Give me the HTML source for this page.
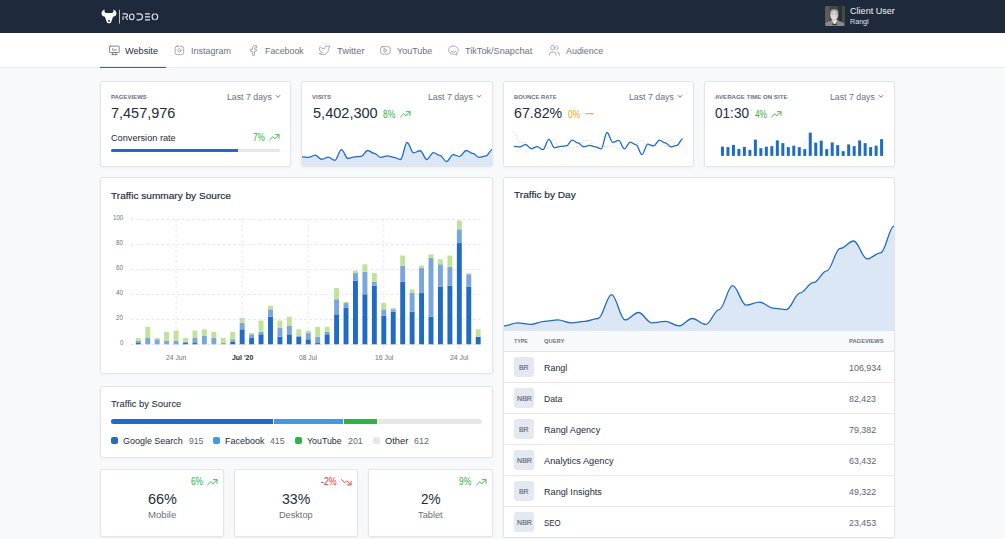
<!DOCTYPE html>
<html lang="en"><head><meta charset="utf-8"><title>Rodeo dashboard</title>
<style>
html,body{margin:0;padding:0}
body{width:1005px;height:539px;overflow:hidden;background:#f8f9fb;font-family:"Liberation Sans",sans-serif;position:relative}
.card{position:absolute;box-sizing:border-box;background:#fff;border:1px solid #e3e5e9;border-radius:2px;box-shadow:0 1px 2.5px rgba(35,46,60,.04)}
.t{position:absolute;white-space:nowrap;line-height:1;transform-origin:0 0}
</style></head><body>
<div style="position:absolute;left:0.00px;top:0.00px;width:1005.00px;height:33.00px;background:#1e293b"></div>
<svg style="position:absolute;left:100px;top:8px" width="62" height="18" viewBox="0 0 62 18">
<path d="M4.7 1.6 C2.2 2.4 1.1 4.6 1.7 6.6 C2.2 8.0 3.6 8.5 4.9 8.8 L6.7 13.7 C7.3 15.8 10.7 15.8 11.3 13.7 L13.1 8.8 C14.4 8.5 15.8 8.0 16.3 6.6 C16.9 4.6 15.8 2.4 13.3 1.6 C13.9 3.4 13.4 4.8 12.0 5.0 L6.0 5.0 C4.6 4.8 4.1 3.4 4.7 1.6 Z" fill="#fff"/>
<ellipse cx="9.0" cy="12.9" rx="1.1" ry="0.8" fill="#1e293b"/>
<rect x="19.0" y="1.8" width="0.9" height="13.8" fill="#cfd4dc"/>
<g fill="none" stroke="#e4e7ec" stroke-width="1.1">
<path d="M23.0 11.9V8.3 M22.5 5.85H26.0a1.55 1.55 0 0 1 0 3.1H24.6 M25.7 9.0L27.7 11.9"/>
<ellipse cx="31.75" cy="8.85" rx="2.3" ry="2.85"/>
<path d="M36.5 5.85H39.5a3.0 3.0 0 0 1 0 6.0H36.5"/>
<path d="M45.0 5.85H50.0 M45.0 8.85H50.0 M45.0 11.85H50.0"/>
<ellipse cx="54.9" cy="8.85" rx="2.8" ry="2.95"/>
</g><rect x="54.2" y="4.8" width="1.4" height="8.2" fill="#1e293b" opacity="0.55"/></svg>
<svg style="position:absolute;left:825px;top:6px" width="20" height="20" viewBox="0 0 20 20">
<defs><clipPath id="av"><rect width="20" height="20" rx="2"/></clipPath>
<radialGradient id="fc" cx="0.45" cy="0.5" r="0.6"><stop offset="0" stop-color="#e4e4e4"/><stop offset="0.7" stop-color="#c9c9c9"/><stop offset="1" stop-color="#9c9c9c"/></radialGradient></defs>
<g clip-path="url(#av)">
<rect width="20" height="20" fill="#454545"/>
<rect x="0" y="0" width="4.5" height="20" fill="#5c5c5c"/>
<rect x="13.5" y="0" width="3.5" height="20" fill="#2f2f2f"/>
<rect x="17" y="0" width="3" height="20" fill="#484848"/>
<path d="M0 20 L0 17.6 C1.8 15.8 4.6 15.2 6.6 14.2 L12.6 14.2 C14.6 15.2 17.4 15.8 19.4 17.6 L20 20 Z" fill="#8a8a8a"/>
<path d="M6.8 14.0 L9.6 18.6 L12.4 14.0 Z" fill="#ededed"/>
<path d="M7.6 17.4 L9.6 18.3 L11.6 17.4 L11.6 19.6 L9.6 18.8 L7.6 19.6 Z" fill="#262626"/>
<path d="M4.9 7.2 C4.7 1.8 13.7 1.6 13.6 7.2 C13.4 8 13 7 12.6 6 C11 4.6 7.4 4.6 5.8 6 C5.4 7 5.1 8 4.9 7.2 Z" fill="#9a9a9a"/>
<ellipse cx="9.2" cy="9.2" rx="4.1" ry="5.3" fill="url(#fc)"/>
<path d="M5.5 5.9 C6.5 3.2 11.9 3.2 12.9 5.9 C11.2 4.7 7.2 4.7 5.5 5.9 Z" fill="#a6a6a6"/>
<path d="M6.9 11.3 C7.9 13.3 10.7 13.3 11.7 11.3 C10.4 12.2 8.2 12.2 6.9 11.3Z" fill="#f6f6f6"/>
<rect x="6.6" y="7.7" width="1.9" height="0.7" fill="#8c8c8c"/><rect x="10.0" y="7.7" width="1.9" height="0.7" fill="#8c8c8c"/>
</g></svg>
<div style="position:absolute;left:0.00px;top:33.00px;width:1005.00px;height:34.00px;background:#fff;border-bottom:1px solid #eceef2"></div>
<div style="position:absolute;left:100.00px;top:67.00px;width:66.00px;height:1.00px;background:#206bc4"></div>
<div style="position:absolute;left:100.00px;top:66.00px;width:66.00px;height:1.00px;background:rgba(32,107,196,.12)"></div>
<svg style="position:absolute;left:107.60px;top:44.20px" width="12.8" height="12.8" viewBox="0 0 24 24" fill="none" stroke="#5d6776" stroke-width="1.45" stroke-linecap="round" stroke-linejoin="round"><rect x="3" y="4" width="18" height="12" rx="1"/><path d="M7 20h10M9 16v4M15 16v4M9 12v-4M12 12v-1M15 12v-2"/></svg>
<svg style="position:absolute;left:173.10px;top:44.20px" width="12.8" height="12.8" viewBox="0 0 24 24" fill="none" stroke="#8b929e" stroke-width="1.45" stroke-linecap="round" stroke-linejoin="round"><rect x="4" y="4" width="16" height="16" rx="4"/><circle cx="12" cy="12" r="3"/><path d="M16.5 7.5v.01"/></svg>
<svg style="position:absolute;left:246.70px;top:44.20px" width="12.8" height="12.8" viewBox="0 0 24 24" fill="none" stroke="#8b929e" stroke-width="1.45" stroke-linecap="round" stroke-linejoin="round"><path d="M7 10v4h3v7h4v-7h3l1 -4h-4v-2a1 1 0 0 1 1 -1h3v-4h-3a5 5 0 0 0 -5 5v2h-3"/></svg>
<svg style="position:absolute;left:318.40px;top:44.20px" width="12.8" height="12.8" viewBox="0 0 24 24" fill="none" stroke="#8b929e" stroke-width="1.45" stroke-linecap="round" stroke-linejoin="round"><path d="M22 4.01c-1 .49 -1.98 .689 -3 .99c-1.121 -1.265 -2.783 -1.335 -4.38 -.737s-2.643 2.06 -2.62 3.737v1c-3.245 .083 -6.135 -1.395 -8 -4c0 0 -4.182 7.433 4 11c-1.872 1.247 -3.739 2.088 -6 2c3.308 1.803 6.913 2.423 10.034 1.517c3.58 -1.04 6.522 -3.723 7.651 -7.742a13.84 13.84 0 0 0 .497 -3.753c-.002 -.249 1.51 -2.772 1.818 -4.013z"/></svg>
<svg style="position:absolute;left:378.90px;top:44.20px" width="12.8" height="12.8" viewBox="0 0 24 24" fill="none" stroke="#8b929e" stroke-width="1.45" stroke-linecap="round" stroke-linejoin="round"><rect x="3" y="5" width="18" height="14" rx="4"/><path d="M10 9l5 3l-5 3z"/></svg>
<svg style="position:absolute;left:447.20px;top:44.20px" width="12.8" height="12.8" viewBox="0 0 24 24" fill="none" stroke="#8b929e" stroke-width="1.45" stroke-linecap="round" stroke-linejoin="round"><path d="M17.802 17.292s.077 -.055 .2 -.149c1.843 -1.425 3 -3.49 3 -5.789c0 -4.286 -4.03 -7.764 -9 -7.764c-4.97 0 -9 3.478 -9 7.764c0 4.288 4.03 7.646 9 7.646c.424 0 1.12 -.028 2.088 -.084c1.262 .82 3.104 1.493 4.716 1.493c.499 0 .734 -.41 .414 -.828c-.486 -.596 -1.156 -1.551 -1.416 -2.29z"/><path d="M7.5 13.5c2.5 2.5 6.5 2.5 9 0"/></svg>
<svg style="position:absolute;left:547.80px;top:44.20px" width="12.8" height="12.8" viewBox="0 0 24 24" fill="none" stroke="#8b929e" stroke-width="1.45" stroke-linecap="round" stroke-linejoin="round"><circle cx="9" cy="7" r="4"/><path d="M3 21v-2a4 4 0 0 1 4 -4h4a4 4 0 0 1 4 4v2"/><path d="M16 3.13a4 4 0 0 1 0 7.75"/><path d="M21 21v-2a4 4 0 0 0 -3 -3.85"/></svg>
<div class="card" style="left:100px;top:81px;width:191px;height:86px"></div>
<div class="card" style="left:301px;top:81px;width:192px;height:86px"></div>
<div class="card" style="left:503px;top:81px;width:191px;height:86px"></div>
<div class="card" style="left:704px;top:81px;width:191px;height:86px"></div>
<svg style="position:absolute;left:274.55px;top:93.2px" width="6" height="6" viewBox="0 0 6 6" fill="none" stroke="#626a78" stroke-width="0.95"><path d="M0.9 2.2L3 4.3L5.1 2.2"/></svg>
<svg style="position:absolute;left:475.60px;top:93.2px" width="6" height="6" viewBox="0 0 6 6" fill="none" stroke="#626a78" stroke-width="0.95"><path d="M0.9 2.2L3 4.3L5.1 2.2"/></svg>
<svg style="position:absolute;left:676.65px;top:93.2px" width="6" height="6" viewBox="0 0 6 6" fill="none" stroke="#626a78" stroke-width="0.95"><path d="M0.9 2.2L3 4.3L5.1 2.2"/></svg>
<svg style="position:absolute;left:877.70px;top:93.2px" width="6" height="6" viewBox="0 0 6 6" fill="none" stroke="#626a78" stroke-width="0.95"><path d="M0.9 2.2L3 4.3L5.1 2.2"/></svg>
<svg style="position:absolute;left:268.05px;top:131.45px" width="12.6" height="12.6" viewBox="0 0 24 24" fill="none" stroke="#2fb344" stroke-width="1.7" stroke-linecap="round" stroke-linejoin="round"><polyline points="3 17 9 11 13 15 21 7"/><polyline points="14 7 21 7 21 14"/></svg>
<div style="position:absolute;left:110.90px;top:149.00px;width:169.00px;height:2.90px;background:#e6e8eb;border-radius:1.5px"></div>
<div style="position:absolute;left:110.90px;top:149.00px;width:126.80px;height:2.90px;background:#206bc4;border-radius:1.5px 0 0 1.5px"></div>
<svg style="position:absolute;left:398.60px;top:108.00px" width="12.6" height="12.6" viewBox="0 0 24 24" fill="none" stroke="#2fb344" stroke-width="1.7" stroke-linecap="round" stroke-linejoin="round"><polyline points="3 17 9 11 13 15 21 7"/><polyline points="14 7 21 7 21 14"/></svg>
<svg style="position:absolute;left:582.95px;top:107.30px" width="13.2" height="13.2" viewBox="0 0 24 24" fill="none" stroke="#f7b540" stroke-width="2.3" stroke-linecap="round" stroke-linejoin="round"><line x1="5" y1="12" x2="19" y2="12"/></svg>
<svg style="position:absolute;left:769.90px;top:108.00px" width="12.6" height="12.6" viewBox="0 0 24 24" fill="none" stroke="#2fb344" stroke-width="1.7" stroke-linecap="round" stroke-linejoin="round"><polyline points="3 17 9 11 13 15 21 7"/><polyline points="14 7 21 7 21 14"/></svg>
<svg style="position:absolute;left:301.60px;top:81.5px;border-radius:0 0 2px 2px" width="190.5" height="84.70" viewBox="0 0 190.5 84.70"><path d="M0.00 74.95C2.43 74.95 4.14 75.47 6.57 75.47C9.00 75.47 10.70 73.15 13.14 73.15C15.57 73.15 17.27 77.28 19.71 77.28C22.14 77.28 23.84 75.21 26.28 75.21C28.71 75.21 30.41 78.31 32.84 78.31C35.28 78.31 36.98 67.73 39.41 67.73C41.85 67.73 43.55 76.50 45.98 76.50C48.42 76.50 50.12 74.95 52.55 74.95C54.98 74.95 56.69 74.44 59.12 74.44C61.55 74.44 63.26 68.50 65.69 68.50C68.12 68.50 69.83 71.34 72.26 71.34C74.69 71.34 76.39 75.47 78.83 75.47C81.26 75.47 82.96 73.92 85.40 73.92C87.83 73.92 89.53 75.47 91.97 75.47C94.40 75.47 96.10 77.53 98.53 77.53C100.97 77.53 102.67 60.51 105.10 60.51C107.54 60.51 109.24 70.83 111.67 70.83C114.11 70.83 115.81 68.76 118.24 68.76C120.67 68.76 122.38 77.53 124.81 77.53C127.24 77.53 128.95 70.57 131.38 70.57C133.81 70.57 135.52 73.41 137.95 73.41C140.38 73.41 142.08 79.60 144.52 79.60C146.95 79.60 148.65 72.63 151.09 72.63C153.52 72.63 155.22 74.44 157.66 74.44C160.09 74.44 161.79 68.50 164.22 68.50C166.66 68.50 168.36 71.34 170.79 71.34C173.23 71.34 174.93 75.47 177.36 75.47C179.80 75.47 181.50 73.92 183.93 73.92C186.36 73.92 188.07 67.21 190.50 67.21L190.5 84.70L0 84.70Z" fill="#dce7f6"/><path d="M0.00 74.95C2.43 74.95 4.14 75.47 6.57 75.47C9.00 75.47 10.70 73.15 13.14 73.15C15.57 73.15 17.27 77.28 19.71 77.28C22.14 77.28 23.84 75.21 26.28 75.21C28.71 75.21 30.41 78.31 32.84 78.31C35.28 78.31 36.98 67.73 39.41 67.73C41.85 67.73 43.55 76.50 45.98 76.50C48.42 76.50 50.12 74.95 52.55 74.95C54.98 74.95 56.69 74.44 59.12 74.44C61.55 74.44 63.26 68.50 65.69 68.50C68.12 68.50 69.83 71.34 72.26 71.34C74.69 71.34 76.39 75.47 78.83 75.47C81.26 75.47 82.96 73.92 85.40 73.92C87.83 73.92 89.53 75.47 91.97 75.47C94.40 75.47 96.10 77.53 98.53 77.53C100.97 77.53 102.67 60.51 105.10 60.51C107.54 60.51 109.24 70.83 111.67 70.83C114.11 70.83 115.81 68.76 118.24 68.76C120.67 68.76 122.38 77.53 124.81 77.53C127.24 77.53 128.95 70.57 131.38 70.57C133.81 70.57 135.52 73.41 137.95 73.41C140.38 73.41 142.08 79.60 144.52 79.60C146.95 79.60 148.65 72.63 151.09 72.63C153.52 72.63 155.22 74.44 157.66 74.44C160.09 74.44 161.79 68.50 164.22 68.50C166.66 68.50 168.36 71.34 170.79 71.34C173.23 71.34 174.93 75.47 177.36 75.47C179.80 75.47 181.50 73.92 183.93 73.92C186.36 73.92 188.07 67.21 190.50 67.21" fill="none" stroke="#206bc4" stroke-width="1.3" stroke-linejoin="round"/></svg>
<svg style="position:absolute;left:0;top:0" width="1005" height="539" viewBox="0 0 1005 539" fill="none"><path d="M513.90 132.50C516.06 132.50 517.56 142.19 519.72 142.19C521.88 142.19 523.39 142.94 525.54 142.94C527.70 142.94 529.21 149.65 531.36 149.65C533.52 149.65 535.03 146.91 537.18 146.91C539.34 146.91 540.85 146.91 543.00 146.91C545.16 146.91 546.67 147.91 548.82 147.91C550.98 147.91 552.49 138.96 554.64 138.96C556.80 138.96 558.31 150.89 560.47 150.89C562.62 150.89 564.13 144.93 566.29 144.93C568.44 144.93 569.95 148.65 572.11 148.65C574.26 148.65 575.77 146.66 577.93 146.66C580.08 146.66 581.59 140.20 583.75 140.20C585.90 140.20 587.41 140.45 589.57 140.45C591.72 140.45 593.23 148.90 595.39 148.90C597.55 148.90 599.05 145.92 601.21 145.92C603.37 145.92 604.88 146.91 607.03 146.91C609.19 146.91 610.70 145.42 612.85 145.42C615.01 145.42 616.52 148.90 618.67 148.90C620.83 148.90 622.34 146.91 624.49 146.91C626.65 146.91 628.16 142.94 630.31 142.94C632.47 142.94 633.98 144.18 636.13 144.18C638.29 144.18 639.80 140.20 641.96 140.20C644.11 140.20 645.62 146.42 647.78 146.42C649.93 146.42 651.44 144.68 653.60 144.68C655.75 144.68 657.26 142.44 659.42 142.44C661.57 142.44 663.08 145.42 665.24 145.42C667.39 145.42 668.90 139.46 671.06 139.46C673.21 139.46 674.72 145.92 676.88 145.92C679.04 145.92 680.54 146.42 682.70 146.42" stroke="#c9ccd2" stroke-width="1" stroke-dasharray="1.3 2.0"/><path d="M513.90 146.42C516.06 146.42 517.56 146.91 519.72 146.91C521.88 146.91 523.39 144.68 525.54 144.68C527.70 144.68 529.21 148.65 531.36 148.65C533.52 148.65 535.03 146.66 537.18 146.66C539.34 146.66 540.85 149.65 543.00 149.65C545.16 149.65 546.67 139.46 548.82 139.46C550.98 139.46 552.49 147.91 554.64 147.91C556.80 147.91 558.31 146.42 560.47 146.42C562.62 146.42 564.13 145.92 566.29 145.92C568.44 145.92 569.95 140.20 572.11 140.20C574.26 140.20 575.77 142.94 577.93 142.94C580.08 142.94 581.59 146.91 583.75 146.91C585.90 146.91 587.41 145.42 589.57 145.42C591.72 145.42 593.23 146.91 595.39 146.91C597.55 146.91 599.05 148.90 601.21 148.90C603.37 148.90 604.88 132.50 607.03 132.50C609.19 132.50 610.70 142.44 612.85 142.44C615.01 142.44 616.52 140.45 618.67 140.45C620.83 140.45 622.34 148.90 624.49 148.90C626.65 148.90 628.16 142.19 630.31 142.19C632.47 142.19 633.98 144.93 636.13 144.93C638.29 144.93 639.80 154.62 641.96 154.62C644.11 154.62 645.62 144.18 647.78 144.18C649.93 144.18 651.44 145.92 653.60 145.92C655.75 145.92 657.26 140.20 659.42 140.20C661.57 140.20 663.08 142.94 665.24 142.94C667.39 142.94 668.90 146.91 671.06 146.91C673.21 146.91 674.72 145.42 676.88 145.42C679.04 145.42 680.54 138.96 682.70 138.96" stroke="#206bc4" stroke-width="1.3" stroke-linejoin="round"/></svg>
<svg style="position:absolute;left:0;top:0" width="1005" height="539" viewBox="0 0 1005 539" fill="#206bc4"><rect x="720.95" y="146.65" width="3.0" height="9.25"/><rect x="726.44" y="147.15" width="3.0" height="8.75"/><rect x="731.93" y="144.90" width="3.0" height="11.00"/><rect x="737.41" y="148.90" width="3.0" height="7.00"/><rect x="742.90" y="146.90" width="3.0" height="9.00"/><rect x="748.39" y="149.90" width="3.0" height="6.00"/><rect x="753.88" y="139.65" width="3.0" height="16.25"/><rect x="759.37" y="148.15" width="3.0" height="7.75"/><rect x="764.85" y="146.65" width="3.0" height="9.25"/><rect x="770.34" y="146.15" width="3.0" height="9.75"/><rect x="775.83" y="140.40" width="3.0" height="15.50"/><rect x="781.32" y="143.15" width="3.0" height="12.75"/><rect x="786.81" y="147.15" width="3.0" height="8.75"/><rect x="792.29" y="145.65" width="3.0" height="10.25"/><rect x="797.78" y="147.15" width="3.0" height="8.75"/><rect x="803.27" y="149.15" width="3.0" height="6.75"/><rect x="808.76" y="132.65" width="3.0" height="23.25"/><rect x="814.25" y="142.65" width="3.0" height="13.25"/><rect x="819.73" y="140.65" width="3.0" height="15.25"/><rect x="825.22" y="149.15" width="3.0" height="6.75"/><rect x="830.71" y="142.40" width="3.0" height="13.50"/><rect x="836.20" y="145.15" width="3.0" height="10.75"/><rect x="841.69" y="151.15" width="3.0" height="4.75"/><rect x="847.17" y="144.40" width="3.0" height="11.50"/><rect x="852.66" y="146.15" width="3.0" height="9.75"/><rect x="858.15" y="140.40" width="3.0" height="15.50"/><rect x="863.64" y="143.15" width="3.0" height="12.75"/><rect x="869.13" y="147.15" width="3.0" height="8.75"/><rect x="874.61" y="145.65" width="3.0" height="10.25"/><rect x="880.10" y="139.15" width="3.0" height="16.75"/></svg>
<div class="card" style="left:100px;top:177px;width:393px;height:197px"></div>
<svg style="position:absolute;left:0;top:0" width="1005" height="539" viewBox="0 0 1005 539"><g stroke="#e5e7eb" stroke-width="1" stroke-dasharray="2.6 2.5"><line x1="131" y1="344.50" x2="481" y2="344.50"/><line x1="131" y1="319.50" x2="481" y2="319.50"/><line x1="131" y1="294.50" x2="481" y2="294.50"/><line x1="131" y1="269.50" x2="481" y2="269.50"/><line x1="131" y1="244.50" x2="481" y2="244.50"/><line x1="131" y1="219.50" x2="481" y2="219.50"/><line x1="176.07" y1="219.5" x2="176.07" y2="344.5"/><line x1="176.07" y1="345.0" x2="176.07" y2="348.5" stroke-dasharray="none"/><line x1="242.16" y1="219.5" x2="242.16" y2="344.5"/><line x1="242.16" y1="345.0" x2="242.16" y2="348.5" stroke-dasharray="none"/><line x1="308.26" y1="219.5" x2="308.26" y2="344.5"/><line x1="308.26" y1="345.0" x2="308.26" y2="348.5" stroke-dasharray="none"/><line x1="383.79" y1="219.5" x2="383.79" y2="344.5"/><line x1="383.79" y1="345.0" x2="383.79" y2="348.5" stroke-dasharray="none"/><line x1="459.33" y1="219.5" x2="459.33" y2="344.5"/><line x1="459.33" y1="345.0" x2="459.33" y2="348.5" stroke-dasharray="none"/></g><rect x="135.85" y="343.05" width="4.9" height="1.25" fill="#206bc4"/><rect x="135.85" y="340.55" width="4.9" height="2.50" fill="#79a6dc"/><rect x="135.85" y="338.05" width="4.9" height="2.50" fill="#bfe399"/><rect x="145.29" y="338.05" width="4.9" height="6.25" fill="#79a6dc"/><rect x="145.29" y="326.80" width="4.9" height="11.25" fill="#bfe399"/><rect x="154.73" y="339.30" width="4.9" height="5.00" fill="#79a6dc"/><rect x="154.73" y="338.05" width="4.9" height="1.25" fill="#bfe399"/><rect x="164.18" y="340.55" width="4.9" height="3.75" fill="#79a6dc"/><rect x="164.18" y="331.80" width="4.9" height="8.75" fill="#bfe399"/><rect x="173.62" y="340.55" width="4.9" height="3.75" fill="#79a6dc"/><rect x="173.62" y="330.55" width="4.9" height="10.00" fill="#bfe399"/><rect x="183.06" y="343.05" width="4.9" height="1.25" fill="#206bc4"/><rect x="183.06" y="341.80" width="4.9" height="1.25" fill="#79a6dc"/><rect x="183.06" y="338.05" width="4.9" height="3.75" fill="#bfe399"/><rect x="192.50" y="343.05" width="4.9" height="1.25" fill="#206bc4"/><rect x="192.50" y="338.05" width="4.9" height="5.00" fill="#79a6dc"/><rect x="192.50" y="330.55" width="4.9" height="7.50" fill="#bfe399"/><rect x="201.94" y="335.55" width="4.9" height="8.75" fill="#79a6dc"/><rect x="201.94" y="329.30" width="4.9" height="6.25" fill="#bfe399"/><rect x="211.39" y="338.05" width="4.9" height="6.25" fill="#79a6dc"/><rect x="211.39" y="331.80" width="4.9" height="6.25" fill="#bfe399"/><rect x="220.83" y="343.05" width="4.9" height="1.25" fill="#79a6dc"/><rect x="220.83" y="338.05" width="4.9" height="5.00" fill="#bfe399"/><rect x="230.27" y="341.80" width="4.9" height="2.50" fill="#206bc4"/><rect x="230.27" y="339.30" width="4.9" height="2.50" fill="#79a6dc"/><rect x="230.27" y="331.80" width="4.9" height="7.50" fill="#bfe399"/><rect x="239.71" y="329.30" width="4.9" height="15.00" fill="#206bc4"/><rect x="239.71" y="323.05" width="4.9" height="6.25" fill="#79a6dc"/><rect x="239.71" y="318.05" width="4.9" height="5.00" fill="#bfe399"/><rect x="249.15" y="338.05" width="4.9" height="6.25" fill="#206bc4"/><rect x="249.15" y="334.30" width="4.9" height="3.75" fill="#79a6dc"/><rect x="249.15" y="333.05" width="4.9" height="1.25" fill="#bfe399"/><rect x="258.60" y="334.30" width="4.9" height="10.00" fill="#206bc4"/><rect x="258.60" y="331.80" width="4.9" height="2.50" fill="#79a6dc"/><rect x="258.60" y="320.55" width="4.9" height="11.25" fill="#bfe399"/><rect x="268.04" y="316.80" width="4.9" height="27.50" fill="#206bc4"/><rect x="268.04" y="309.30" width="4.9" height="7.50" fill="#79a6dc"/><rect x="268.04" y="305.55" width="4.9" height="3.75" fill="#bfe399"/><rect x="277.48" y="336.80" width="4.9" height="7.50" fill="#206bc4"/><rect x="277.48" y="328.05" width="4.9" height="8.75" fill="#79a6dc"/><rect x="277.48" y="320.55" width="4.9" height="7.50" fill="#bfe399"/><rect x="286.92" y="334.30" width="4.9" height="10.00" fill="#206bc4"/><rect x="286.92" y="325.55" width="4.9" height="8.75" fill="#79a6dc"/><rect x="286.92" y="316.80" width="4.9" height="8.75" fill="#bfe399"/><rect x="296.36" y="336.80" width="4.9" height="7.50" fill="#206bc4"/><rect x="296.36" y="335.55" width="4.9" height="1.25" fill="#79a6dc"/><rect x="296.36" y="329.30" width="4.9" height="6.25" fill="#bfe399"/><rect x="305.81" y="339.30" width="4.9" height="5.00" fill="#206bc4"/><rect x="305.81" y="333.05" width="4.9" height="6.25" fill="#79a6dc"/><rect x="305.81" y="330.55" width="4.9" height="2.50" fill="#bfe399"/><rect x="315.25" y="343.05" width="4.9" height="1.25" fill="#206bc4"/><rect x="315.25" y="336.80" width="4.9" height="6.25" fill="#79a6dc"/><rect x="315.25" y="326.80" width="4.9" height="10.00" fill="#bfe399"/><rect x="324.69" y="334.30" width="4.9" height="10.00" fill="#206bc4"/><rect x="324.69" y="331.80" width="4.9" height="2.50" fill="#79a6dc"/><rect x="324.69" y="326.80" width="4.9" height="5.00" fill="#bfe399"/><rect x="334.13" y="314.30" width="4.9" height="30.00" fill="#206bc4"/><rect x="334.13" y="299.30" width="4.9" height="15.00" fill="#79a6dc"/><rect x="334.13" y="288.05" width="4.9" height="11.25" fill="#bfe399"/><rect x="343.57" y="308.05" width="4.9" height="36.25" fill="#206bc4"/><rect x="343.57" y="303.05" width="4.9" height="5.00" fill="#79a6dc"/><rect x="343.57" y="301.80" width="4.9" height="1.25" fill="#bfe399"/><rect x="353.02" y="280.55" width="4.9" height="63.75" fill="#206bc4"/><rect x="353.02" y="273.05" width="4.9" height="7.50" fill="#79a6dc"/><rect x="353.02" y="270.55" width="4.9" height="2.50" fill="#bfe399"/><rect x="362.46" y="294.30" width="4.9" height="50.00" fill="#206bc4"/><rect x="362.46" y="271.80" width="4.9" height="22.50" fill="#79a6dc"/><rect x="362.46" y="264.30" width="4.9" height="7.50" fill="#bfe399"/><rect x="371.90" y="285.55" width="4.9" height="58.75" fill="#206bc4"/><rect x="371.90" y="281.80" width="4.9" height="3.75" fill="#79a6dc"/><rect x="371.90" y="273.05" width="4.9" height="8.75" fill="#bfe399"/><rect x="381.34" y="315.55" width="4.9" height="28.75" fill="#206bc4"/><rect x="381.34" y="309.30" width="4.9" height="6.25" fill="#79a6dc"/><rect x="381.34" y="303.05" width="4.9" height="6.25" fill="#bfe399"/><rect x="390.78" y="311.80" width="4.9" height="32.50" fill="#206bc4"/><rect x="390.78" y="309.30" width="4.9" height="2.50" fill="#79a6dc"/><rect x="390.78" y="308.05" width="4.9" height="1.25" fill="#bfe399"/><rect x="400.23" y="281.80" width="4.9" height="62.50" fill="#206bc4"/><rect x="400.23" y="265.55" width="4.9" height="16.25" fill="#79a6dc"/><rect x="400.23" y="255.55" width="4.9" height="10.00" fill="#bfe399"/><rect x="409.67" y="311.80" width="4.9" height="32.50" fill="#206bc4"/><rect x="409.67" y="293.05" width="4.9" height="18.75" fill="#79a6dc"/><rect x="409.67" y="289.30" width="4.9" height="3.75" fill="#bfe399"/><rect x="419.11" y="293.05" width="4.9" height="51.25" fill="#206bc4"/><rect x="419.11" y="268.05" width="4.9" height="25.00" fill="#79a6dc"/><rect x="419.11" y="265.55" width="4.9" height="2.50" fill="#bfe399"/><rect x="428.55" y="316.80" width="4.9" height="27.50" fill="#206bc4"/><rect x="428.55" y="258.05" width="4.9" height="58.75" fill="#79a6dc"/><rect x="428.55" y="254.30" width="4.9" height="3.75" fill="#bfe399"/><rect x="437.99" y="286.80" width="4.9" height="57.50" fill="#206bc4"/><rect x="437.99" y="264.30" width="4.9" height="22.50" fill="#79a6dc"/><rect x="437.99" y="259.30" width="4.9" height="5.00" fill="#bfe399"/><rect x="447.44" y="285.55" width="4.9" height="58.75" fill="#206bc4"/><rect x="447.44" y="266.80" width="4.9" height="18.75" fill="#79a6dc"/><rect x="447.44" y="255.55" width="4.9" height="11.25" fill="#bfe399"/><rect x="456.88" y="243.05" width="4.9" height="101.25" fill="#206bc4"/><rect x="456.88" y="229.30" width="4.9" height="13.75" fill="#79a6dc"/><rect x="456.88" y="220.55" width="4.9" height="8.75" fill="#bfe399"/><rect x="466.32" y="286.80" width="4.9" height="57.50" fill="#206bc4"/><rect x="466.32" y="274.30" width="4.9" height="12.50" fill="#79a6dc"/><rect x="466.32" y="273.05" width="4.9" height="1.25" fill="#bfe399"/><rect x="475.76" y="336.80" width="4.9" height="7.50" fill="#206bc4"/><rect x="475.76" y="329.30" width="4.9" height="7.50" fill="#bfe399"/></svg>
<div class="card" style="left:100px;top:386px;width:393px;height:72px"></div>
<div style="position:absolute;left:111.4px;top:419.2px;width:370.9px;height:4.6px;border-radius:2.3px;overflow:hidden;background:#e6e7e9">
<div style="position:absolute;left:0;top:0;height:100%;width:161.3px;background:#206bc4"></div>
<div style="position:absolute;left:161.3px;top:0;height:100%;width:1.3px;background:#fff"></div>
<div style="position:absolute;left:162.6px;top:0;height:100%;width:68.6px;background:#4299e1"></div>
<div style="position:absolute;left:231.2px;top:0;height:100%;width:1.3px;background:#fff"></div>
<div style="position:absolute;left:232.5px;top:0;height:100%;width:33.1px;background:#2fb344"></div>
<div style="position:absolute;left:265.6px;top:0;height:100%;width:1.3px;background:#fff"></div>
</div>
<div style="position:absolute;left:110.90px;top:437.20px;width:6.90px;height:6.90px;background:#206bc4;border-radius:2px"></div>
<div style="position:absolute;left:213.00px;top:437.20px;width:6.90px;height:6.90px;background:#4299e1;border-radius:2px"></div>
<div style="position:absolute;left:295.00px;top:437.20px;width:6.90px;height:6.90px;background:#2fb344;border-radius:2px"></div>
<div style="position:absolute;left:373.10px;top:437.20px;width:6.90px;height:6.90px;background:#e6e7e9;border-radius:2px"></div>
<div class="card" style="left:100px;top:469px;width:124px;height:68px"></div>
<div class="card" style="left:234px;top:469px;width:124px;height:68px"></div>
<div class="card" style="left:368px;top:469px;width:125px;height:68px"></div>
<svg style="position:absolute;left:205.70px;top:475.60px" width="12.6" height="12.6" viewBox="0 0 24 24" fill="none" stroke="#2fb344" stroke-width="1.7" stroke-linecap="round" stroke-linejoin="round"><polyline points="3 17 9 11 13 15 21 7"/><polyline points="14 7 21 7 21 14"/></svg>
<svg style="position:absolute;left:340.15px;top:475.60px" width="12.6" height="12.6" viewBox="0 0 24 24" fill="none" stroke="#d63939" stroke-width="1.7" stroke-linecap="round" stroke-linejoin="round"><polyline points="3 7 9 13 13 9 21 17"/><polyline points="21 10 21 17 14 17"/></svg>
<svg style="position:absolute;left:474.90px;top:475.60px" width="12.6" height="12.6" viewBox="0 0 24 24" fill="none" stroke="#2fb344" stroke-width="1.7" stroke-linecap="round" stroke-linejoin="round"><polyline points="3 17 9 11 13 15 21 7"/><polyline points="14 7 21 7 21 14"/></svg>
<div class="card" style="left:503px;top:177px;width:392px;height:361px"></div>
<svg style="position:absolute;left:0;top:0" width="1005" height="539" viewBox="0 0 1005 539"><path d="M504.00 325.93C508.98 325.93 512.47 322.95 517.45 322.95C522.43 322.95 525.92 324.44 530.90 324.44C535.88 324.44 539.36 321.46 544.34 321.46C549.33 321.46 552.81 319.97 557.79 319.97C562.77 319.97 566.26 322.95 571.24 322.95C576.22 322.95 579.71 321.46 584.69 321.46C589.67 321.46 593.16 318.48 598.14 318.48C603.12 318.48 606.61 294.64 611.59 294.64C616.57 294.64 620.05 319.97 625.03 319.97C630.02 319.97 633.50 312.52 638.48 312.52C643.46 312.52 646.95 322.95 651.93 322.95C656.91 322.95 660.40 321.46 665.38 321.46C670.36 321.46 673.85 325.93 678.83 325.93C683.81 325.93 687.30 318.48 692.28 318.48C697.26 318.48 700.74 324.44 705.72 324.44C710.70 324.44 714.19 309.54 719.17 309.54C724.15 309.54 727.64 285.70 732.62 285.70C737.60 285.70 741.09 305.07 746.07 305.07C751.05 305.07 754.54 302.09 759.52 302.09C764.50 302.09 767.98 308.05 772.97 308.05C777.95 308.05 781.43 309.54 786.41 309.54C791.39 309.54 794.88 293.15 799.86 293.15C804.84 293.15 808.33 282.72 813.31 282.72C818.29 282.72 821.78 270.80 826.76 270.80C831.74 270.80 835.23 248.45 840.21 248.45C845.19 248.45 848.67 241.00 853.66 241.00C858.64 241.00 862.12 258.88 867.10 258.88C872.08 258.88 875.57 252.92 880.55 252.92C885.53 252.92 889.02 226.10 894.00 226.10L894 331L504 331Z" fill="#dce7f6"/><path d="M504.00 325.93C508.98 325.93 512.47 322.95 517.45 322.95C522.43 322.95 525.92 324.44 530.90 324.44C535.88 324.44 539.36 321.46 544.34 321.46C549.33 321.46 552.81 319.97 557.79 319.97C562.77 319.97 566.26 322.95 571.24 322.95C576.22 322.95 579.71 321.46 584.69 321.46C589.67 321.46 593.16 318.48 598.14 318.48C603.12 318.48 606.61 294.64 611.59 294.64C616.57 294.64 620.05 319.97 625.03 319.97C630.02 319.97 633.50 312.52 638.48 312.52C643.46 312.52 646.95 322.95 651.93 322.95C656.91 322.95 660.40 321.46 665.38 321.46C670.36 321.46 673.85 325.93 678.83 325.93C683.81 325.93 687.30 318.48 692.28 318.48C697.26 318.48 700.74 324.44 705.72 324.44C710.70 324.44 714.19 309.54 719.17 309.54C724.15 309.54 727.64 285.70 732.62 285.70C737.60 285.70 741.09 305.07 746.07 305.07C751.05 305.07 754.54 302.09 759.52 302.09C764.50 302.09 767.98 308.05 772.97 308.05C777.95 308.05 781.43 309.54 786.41 309.54C791.39 309.54 794.88 293.15 799.86 293.15C804.84 293.15 808.33 282.72 813.31 282.72C818.29 282.72 821.78 270.80 826.76 270.80C831.74 270.80 835.23 248.45 840.21 248.45C845.19 248.45 848.67 241.00 853.66 241.00C858.64 241.00 862.12 258.88 867.10 258.88C872.08 258.88 875.57 252.92 880.55 252.92C885.53 252.92 889.02 226.10 894.00 226.10" fill="none" stroke="#206bc4" stroke-width="1.3" stroke-linejoin="round"/></svg>
<div style="position:absolute;left:504.00px;top:331.00px;width:390.00px;height:20.00px;background:#f8f9fb"></div>
<div style="position:absolute;left:504.00px;top:351.00px;width:390.00px;height:1.00px;background:#e4e6ea"></div>
<div style="position:absolute;left:514.00px;top:357.00px;width:20.00px;height:20.00px;background:#e4e8f1;border-radius:2.4px"></div>
<div style="position:absolute;left:504.00px;top:382.00px;width:390.00px;height:1.00px;background:#e6e8ec"></div>
<div style="position:absolute;left:514.00px;top:388.00px;width:20.00px;height:20.00px;background:#e4e8f1;border-radius:2.4px"></div>
<div style="position:absolute;left:504.00px;top:413.00px;width:390.00px;height:1.00px;background:#e6e8ec"></div>
<div style="position:absolute;left:514.00px;top:419.00px;width:20.00px;height:20.00px;background:#e4e8f1;border-radius:2.4px"></div>
<div style="position:absolute;left:504.00px;top:444.00px;width:390.00px;height:1.00px;background:#e6e8ec"></div>
<div style="position:absolute;left:514.00px;top:450.00px;width:20.00px;height:20.00px;background:#e4e8f1;border-radius:2.4px"></div>
<div style="position:absolute;left:504.00px;top:475.00px;width:390.00px;height:1.00px;background:#e6e8ec"></div>
<div style="position:absolute;left:514.00px;top:481.00px;width:20.00px;height:20.00px;background:#e4e8f1;border-radius:2.4px"></div>
<div style="position:absolute;left:504.00px;top:506.00px;width:390.00px;height:1.00px;background:#e6e8ec"></div>
<div style="position:absolute;left:514.00px;top:512.00px;width:20.00px;height:20.00px;background:#e4e8f1;border-radius:2.4px"></div>
<span class="t" id="t0" style="left:850.30px;top:6.000px;font-size:9.6px;color:#f1f3f6;transform:scaleX(0.9462)">Client User</span>
<span class="t" id="t1" style="left:850.30px;top:18.000px;font-size:7.5px;color:#e1e4e9;transform:scaleX(0.9536)">Rangl</span>
<span class="t" id="t2" style="left:125.00px;top:46.000px;font-size:9.6px;color:#232e3c;transform:scaleX(0.9570)">Website</span>
<span class="t" id="t3" style="left:191.20px;top:46.000px;font-size:9.6px;color:#6a727f;transform:scaleX(0.9374)">Instagram</span>
<span class="t" id="t4" style="left:264.80px;top:46.000px;font-size:9.6px;color:#6a727f;transform:scaleX(0.9184)">Facebook</span>
<span class="t" id="t5" style="left:336.50px;top:46.000px;font-size:9.6px;color:#6a727f;transform:scaleX(0.9729)">Twitter</span>
<span class="t" id="t6" style="left:397.00px;top:46.000px;font-size:9.6px;color:#6a727f;transform:scaleX(0.9363)">YouTube</span>
<span class="t" id="t7" style="left:465.30px;top:46.000px;font-size:9.6px;color:#6a727f;transform:scaleX(0.9521)">TikTok/Snapchat</span>
<span class="t" id="t8" style="left:565.90px;top:46.000px;font-size:9.6px;color:#6a727f;transform:scaleX(0.9296)">Audience</span>
<span class="t" id="t9" style="left:110.80px;top:95.000px;font-size:5.9px;color:#6a727f;font-weight:bold;transform:scaleX(1.0156)">PAGEVIEWS</span>
<span class="t" id="t10" style="left:227.20px;top:92.000px;font-size:9.6px;color:#6a727f;transform:scaleX(0.9128)">Last 7 days</span>
<span class="t" id="t11" style="left:111.40px;top:105.000px;font-size:15.2px;color:#232e3c;transform:scaleX(0.9530)">7,457,976</span>
<span class="t" id="t12" style="left:312.40px;top:95.000px;font-size:5.9px;color:#6a727f;font-weight:bold;transform:scaleX(1.0122)">VISITS</span>
<span class="t" id="t13" style="left:428.25px;top:92.000px;font-size:9.6px;color:#6a727f;transform:scaleX(0.9128)">Last 7 days</span>
<span class="t" id="t14" style="left:313.00px;top:105.000px;font-size:15.2px;color:#232e3c;transform:scaleX(0.9574)">5,402,300</span>
<span class="t" id="t15" style="left:513.90px;top:95.000px;font-size:5.9px;color:#6a727f;font-weight:bold;transform:scaleX(0.9961)">BOUNCE RATE</span>
<span class="t" id="t16" style="left:629.30px;top:92.000px;font-size:9.6px;color:#6a727f;transform:scaleX(0.9128)">Last 7 days</span>
<span class="t" id="t17" style="left:513.90px;top:105.000px;font-size:15.2px;color:#232e3c;transform:scaleX(0.9356)">67.82%</span>
<span class="t" id="t18" style="left:714.50px;top:95.000px;font-size:5.9px;color:#6a727f;font-weight:bold;transform:scaleX(1.0415)">AVERAGE TIME ON SITE</span>
<span class="t" id="t19" style="left:830.35px;top:92.000px;font-size:9.6px;color:#6a727f;transform:scaleX(0.9128)">Last 7 days</span>
<span class="t" id="t20" style="left:714.60px;top:105.000px;font-size:15.2px;color:#232e3c;transform:scaleX(0.8944)">01:30</span>
<span class="t" id="t21" style="left:110.80px;top:133.000px;font-size:9.6px;color:#232e3c;transform:scaleX(0.9552)">Conversion rate</span>
<span class="t" id="t22" style="left:252.80px;top:133.000px;font-size:10.0px;color:#2fb344;transform:scaleX(0.8303)">7%</span>
<span class="t" id="t23" style="left:383.20px;top:110.000px;font-size:10.0px;color:#2fb344;transform:scaleX(0.8441)">8%</span>
<span class="t" id="t24" style="left:567.70px;top:110.000px;font-size:10.0px;color:#f59f00;transform:scaleX(0.8372)">0%</span>
<span class="t" id="t25" style="left:754.50px;top:110.000px;font-size:10.0px;color:#2fb344;transform:scaleX(0.8303)">4%</span>
<span class="t" id="t26" style="left:111.00px;top:191.000px;font-size:9.9px;color:#232e3c;-webkit-text-stroke:0.18px #232e3c;transform:scaleX(1.0210)">Traffic summary by Source</span>
<span class="t" id="t27" style="left:119.80px;top:339.000px;font-size:7.0px;color:#6a727f;transform:scaleX(0.8704)">0</span>
<span class="t" id="t28" style="left:116.30px;top:314.000px;font-size:7.0px;color:#6a727f;transform:scaleX(0.8850)">20</span>
<span class="t" id="t29" style="left:116.30px;top:289.000px;font-size:7.0px;color:#6a727f;transform:scaleX(0.8850)">40</span>
<span class="t" id="t30" style="left:116.30px;top:264.000px;font-size:7.0px;color:#6a727f;transform:scaleX(0.8850)">60</span>
<span class="t" id="t31" style="left:116.30px;top:239.000px;font-size:7.0px;color:#6a727f;transform:scaleX(0.8850)">80</span>
<span class="t" id="t32" style="left:113.00px;top:214.000px;font-size:7.0px;color:#6a727f;transform:scaleX(0.8727)">100</span>
<span class="t" id="t33" style="left:165.92px;top:354.000px;font-size:7.0px;color:#6a727f;transform:scaleX(0.9652)">24 Jun</span>
<span class="t" id="t34" style="left:231.51px;top:354.000px;font-size:7.0px;color:#232e3c;font-weight:bold;transform:scaleX(0.9900)">Jul '20</span>
<span class="t" id="t35" style="left:299.26px;top:354.000px;font-size:7.0px;color:#6a727f;transform:scaleX(0.9632)">08 Jul</span>
<span class="t" id="t36" style="left:374.64px;top:354.000px;font-size:7.0px;color:#6a727f;transform:scaleX(0.9793)">16 Jul</span>
<span class="t" id="t37" style="left:450.18px;top:354.000px;font-size:7.0px;color:#6a727f;transform:scaleX(0.9793)">24 Jul</span>
<span class="t" id="t38" style="left:110.90px;top:399.000px;font-size:9.9px;color:#232e3c;-webkit-text-stroke:0.06px #232e3c;transform:scaleX(0.9488)">Traffic by Source</span>
<span class="t" id="t39" style="left:122.90px;top:436.000px;font-size:9.6px;color:#232e3c;transform:scaleX(0.9328)">Google Search</span>
<span class="t" id="t40" style="left:188.50px;top:436.000px;font-size:9.6px;color:#5f6775;transform:scaleX(0.8991)">915</span>
<span class="t" id="t41" style="left:225.40px;top:436.000px;font-size:9.6px;color:#232e3c;transform:scaleX(0.9350)">Facebook</span>
<span class="t" id="t42" style="left:270.10px;top:436.000px;font-size:9.6px;color:#5f6775;transform:scaleX(0.9116)">415</span>
<span class="t" id="t43" style="left:307.30px;top:436.000px;font-size:9.6px;color:#232e3c;transform:scaleX(0.9203)">YouTube</span>
<span class="t" id="t44" style="left:347.70px;top:436.000px;font-size:9.6px;color:#5f6775;transform:scaleX(0.9179)">201</span>
<span class="t" id="t45" style="left:384.90px;top:436.000px;font-size:9.6px;color:#232e3c;transform:scaleX(0.9750)">Other</span>
<span class="t" id="t46" style="left:413.80px;top:436.000px;font-size:9.6px;color:#5f6775;transform:scaleX(0.9303)">612</span>
<span class="t" id="t47" style="left:147.55px;top:491.000px;font-size:15.2px;color:#232e3c;transform:scaleX(0.9505)">66%</span>
<span class="t" id="t48" style="left:147.85px;top:510.000px;font-size:9.6px;color:#6a727f;transform:scaleX(1.0012)">Mobile</span>
<span class="t" id="t49" style="left:190.50px;top:477.000px;font-size:10.0px;color:#2fb344;transform:scaleX(0.8303)">6%</span>
<span class="t" id="t50" style="left:281.90px;top:491.000px;font-size:15.2px;color:#232e3c;transform:scaleX(0.9274)">33%</span>
<span class="t" id="t51" style="left:279.20px;top:510.000px;font-size:9.6px;color:#6a727f;transform:scaleX(0.9545)">Desktop</span>
<span class="t" id="t52" style="left:321.30px;top:477.000px;font-size:10.0px;color:#d63939;transform:scaleX(0.8766)">-2%</span>
<span class="t" id="t53" style="left:420.70px;top:491.000px;font-size:15.2px;color:#232e3c;transform:scaleX(0.8928)">2%</span>
<span class="t" id="t54" style="left:418.15px;top:510.000px;font-size:9.6px;color:#6a727f;transform:scaleX(0.9645)">Tablet</span>
<span class="t" id="t55" style="left:458.90px;top:477.000px;font-size:10.0px;color:#2fb344;transform:scaleX(0.8372)">9%</span>
<span class="t" id="t56" style="left:513.60px;top:190.000px;font-size:9.9px;color:#232e3c;-webkit-text-stroke:0.18px #232e3c;transform:scaleX(1.0236)">Traffic by Day</span>
<span class="t" id="t57" style="left:514.10px;top:339.000px;font-size:5.9px;color:#6a727f;font-weight:bold;transform:scaleX(0.8966)">TYPE</span>
<span class="t" id="t58" style="left:543.70px;top:339.000px;font-size:5.9px;color:#6a727f;font-weight:bold;transform:scaleX(0.9791)">QUERY</span>
<span class="t" id="t59" style="left:848.50px;top:339.000px;font-size:5.9px;color:#6a727f;font-weight:bold;transform:scaleX(0.9844)">PAGEVIEWS</span>
<span class="t" id="t60" style="left:519.20px;top:364.000px;font-size:7.9px;color:#667080;-webkit-text-stroke:0.22px #667080;transform:scaleX(0.8752)">BR</span>
<span class="t" id="t61" style="left:543.70px;top:363.000px;font-size:9.6px;color:#232e3c;transform:scaleX(0.9291)">Rangl</span>
<span class="t" id="t62" style="left:848.50px;top:363.000px;font-size:9.6px;color:#5d6675;transform:scaleX(0.9254)">106,934</span>
<span class="t" id="t63" style="left:516.50px;top:395.000px;font-size:7.9px;color:#667080;-webkit-text-stroke:0.22px #667080;transform:scaleX(0.8997)">NBR</span>
<span class="t" id="t64" style="left:543.70px;top:394.000px;font-size:9.6px;color:#232e3c;transform:scaleX(0.9030)">Data</span>
<span class="t" id="t65" style="left:848.50px;top:394.000px;font-size:9.6px;color:#5d6675;transform:scaleX(0.9201)">82,423</span>
<span class="t" id="t66" style="left:519.20px;top:426.000px;font-size:7.9px;color:#667080;-webkit-text-stroke:0.22px #667080;transform:scaleX(0.8752)">BR</span>
<span class="t" id="t67" style="left:543.70px;top:425.000px;font-size:9.6px;color:#232e3c;transform:scaleX(0.9493)">Rangl Agency</span>
<span class="t" id="t68" style="left:848.50px;top:425.000px;font-size:9.6px;color:#5d6675;transform:scaleX(0.9269)">79,382</span>
<span class="t" id="t69" style="left:516.50px;top:457.000px;font-size:7.9px;color:#667080;-webkit-text-stroke:0.22px #667080;transform:scaleX(0.8997)">NBR</span>
<span class="t" id="t70" style="left:543.70px;top:456.000px;font-size:9.6px;color:#232e3c;transform:scaleX(0.9596)">Analytics Agency</span>
<span class="t" id="t71" style="left:848.50px;top:456.000px;font-size:9.6px;color:#5d6675;transform:scaleX(0.9269)">63,432</span>
<span class="t" id="t72" style="left:519.20px;top:488.000px;font-size:7.9px;color:#667080;-webkit-text-stroke:0.22px #667080;transform:scaleX(0.8752)">BR</span>
<span class="t" id="t73" style="left:543.70px;top:487.000px;font-size:9.6px;color:#232e3c;transform:scaleX(0.9507)">Rangl Insights</span>
<span class="t" id="t74" style="left:848.50px;top:487.000px;font-size:9.6px;color:#5d6675;transform:scaleX(0.9269)">49,322</span>
<span class="t" id="t75" style="left:516.50px;top:519.000px;font-size:7.9px;color:#667080;-webkit-text-stroke:0.22px #667080;transform:scaleX(0.8997)">NBR</span>
<span class="t" id="t76" style="left:543.70px;top:518.000px;font-size:9.6px;color:#232e3c;transform:scaleX(0.8191)">SEO</span>
<span class="t" id="t77" style="left:848.50px;top:518.000px;font-size:9.6px;color:#5d6675;transform:scaleX(0.9269)">23,453</span>
</body></html>
